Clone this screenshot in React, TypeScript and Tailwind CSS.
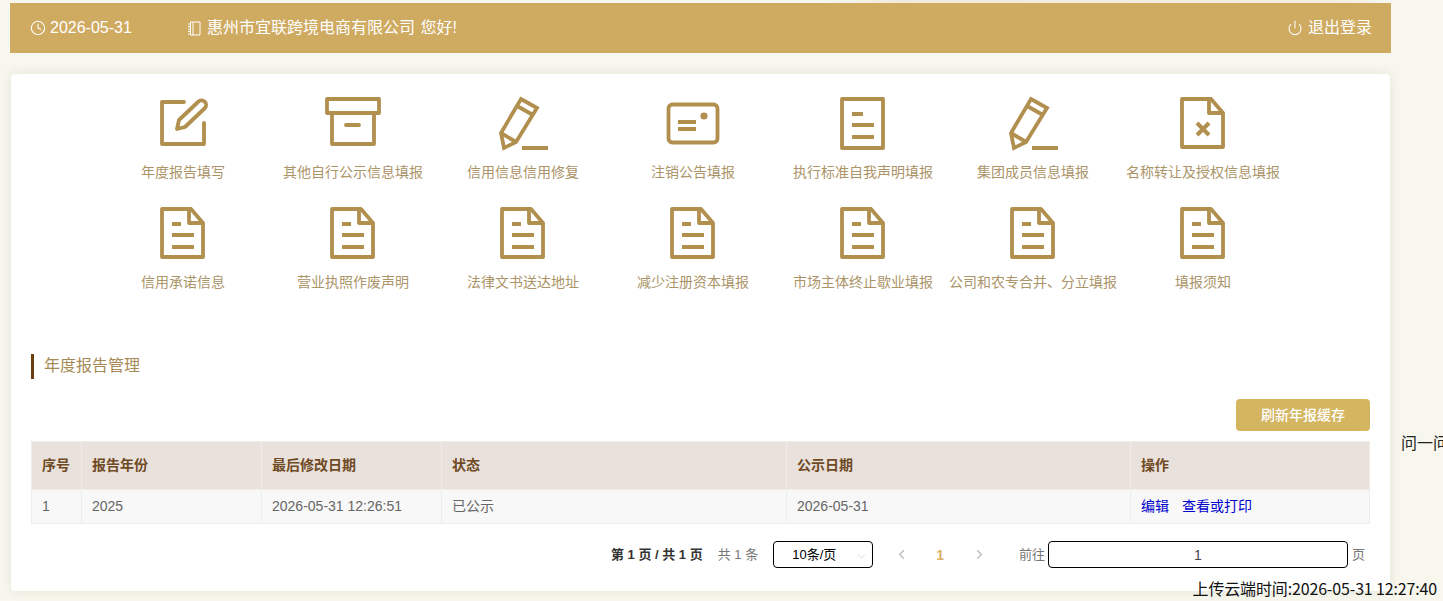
import { ChevronDown, ChevronLeft, ChevronRight, Clock, Power } from "lucide-react";
import type { ReactNode } from "react";

const FONT = "font-['Liberation_Sans','Noto_Sans_CJK_SC',sans-serif]";

function Glyph({ children }: { children: ReactNode }) {
	return (
		<svg
			viewBox="0 0 60 60"
			className="h-[60px] w-[60px]"
			fill="none"
			stroke="#b18f4f"
			strokeWidth="3.8"
			strokeLinejoin="round"
		>
			{children}
		</svg>
	);
}

const editIcon = (
	<Glyph>
		<path d="M31 8H9V50H51V29" strokeLinecap="round" />
		<path d="M24 35L26 26L45 8A4.6 4.6 0 0 1 52 14L32 33Z" />
	</Glyph>
);

const boxIcon = (
	<Glyph>
		<rect x="4" y="5" width="52" height="14" />
		<path d="M9 19V50H51V19" />
		<path d="M23 31H36" strokeLinecap="round" />
	</Glyph>
);

const pencilIcon = (
	<Glyph>
		<path d="M28 5L44 14L23 48L11 54L8 39Z" strokeLinejoin="miter" />
		<path d="M24 12L40 21M8 39L23 48" />
		<path d="M29 54H55" strokeWidth="4" />
	</Glyph>
);

const cardIcon = (
	<Glyph>
		<rect x="5.5" y="10.5" width="49" height="38" rx="4" />
		<path d="M15 28H33M15 35H33" />
		<circle cx="41" cy="22" r="3.6" fill="#b18f4f" stroke="none" />
	</Glyph>
);

const pageIcon = (
	<Glyph>
		<rect x="9" y="5" width="41" height="49" />
		<path d="M19 20H30M19 31H41M19 43H41" />
	</Glyph>
);

const foldOutline = (
	<>
		<path d="M9 5H38L50 19V53H9Z" />
		<path d="M36 5V19H50" />
	</>
);

const crossIcon = (
	<Glyph>
		{foldOutline}
		<path d="M24 29L36 41M36 29L24 41" strokeWidth="4" />
	</Glyph>
);

const docIcon = (
	<Glyph>
		{foldOutline}
		<path d="M19 20H28M19 31H41M19 43H41" />
	</Glyph>
);

const tiles = [
	{ label: "年度报告填写", icon: editIcon },
	{ label: "其他自行公示信息填报", icon: boxIcon },
	{ label: "信用信息信用修复", icon: pencilIcon },
	{ label: "注销公告填报", icon: cardIcon },
	{ label: "执行标准自我声明填报", icon: pageIcon },
	{ label: "集团成员信息填报", icon: pencilIcon },
	{ label: "名称转让及授权信息填报", icon: crossIcon },
	{ label: "信用承诺信息", icon: docIcon },
	{ label: "营业执照作废声明", icon: docIcon },
	{ label: "法律文书送达地址", icon: docIcon },
	{ label: "减少注册资本填报", icon: docIcon },
	{ label: "市场主体终止歇业填报", icon: docIcon },
	{ label: "公司和农专合并、分立填报", icon: docIcon },
	{ label: "填报须知", icon: docIcon },
];

export default function App() {
	return (
		<div className={`relative h-[601px] w-[1443px] overflow-hidden bg-[#f7f7ee] ${FONT}`}>
			<div className="h-[3px] bg-[linear-gradient(90deg,transparent_57%,#f1ebdc_62%,#f4efe3_94%,transparent_96%)]" />

			<header className="ml-[10px] flex h-[50px] w-[1381px] items-center bg-[#cfaa61] pl-[20px] pr-[19px] text-base text-white">
				<Clock size={16} strokeWidth={1.6} />
				<span className="ml-[4px] w-[137px]">2026-05-31</span>
				<svg viewBox="0 0 14 15" className="h-[15px] w-[14px]" fill="none" stroke="white" strokeWidth="1">
					<path d="M3.5 1H13V14H3.5ZM6 1V14M1 3H3.5M1 5.5H3.5M1 8H3.5M1 10.5H3.5M1 13H3.5" />
				</svg>
				<span className="ml-[6px] [word-spacing:1px]">惠州市宜联跨境电商有限公司 您好!</span>
				<Power size={16} strokeWidth={1.6} className="ml-auto" />
				<span className="ml-[5px]">退出登录</span>
			</header>

			<main className="ml-[11px] mt-[21px] h-[517px] w-[1379px] rounded-[4px] bg-white px-[20px] pt-[20px] shadow-[0_0_12px_rgba(90,90,50,0.12)]">
				<div className="ml-[67px] grid w-[1190px] grid-cols-7 gap-y-[22px]">
					{tiles.map((tile) => (
						<div key={tile.label} className="flex flex-col items-center">
							{tile.icon}
							<span className="mt-[8px] whitespace-nowrap text-sm leading-5 text-[#ab9468]">{tile.label}</span>
						</div>
					))}
				</div>

				<h2 className="mt-[62px] h-[25px] border-l-[3px] border-[#6b3f0e] pl-[10px] text-base leading-[23px] text-[#a58a55]">
					年度报告管理
				</h2>

				<div className="mt-[20px] flex justify-end">
					<button className="h-[32px] w-[134px] rounded-[4px] bg-[#d4b560] text-sm font-medium text-white">刷新年报缓存</button>
				</div>

				<table className="mt-[10px] w-[1338px] table-fixed border-collapse text-left text-sm">
					<colgroup>
						<col className="w-[50px]" />
						<col className="w-[180px]" />
						<col className="w-[180px]" />
						<col className="w-[345px]" />
						<col className="w-[344px]" />
						<col className="w-[239px]" />
					</colgroup>
					<thead>
						<tr className="h-[48px] bg-[#e9e1db] font-bold text-[#6f4a24]">
							{["序号", "报告年份", "最后修改日期", "状态", "公示日期", "操作"].map((title) => (
								<th key={title} className="border border-[#f0ece8] px-[10px] pb-[2px] font-bold">
									{title}
								</th>
							))}
						</tr>
					</thead>
					<tbody>
						<tr className="h-[34px] bg-[#f8f8f8] text-[#666666]">
							<td className="border border-[#ededed] px-[10px] pb-[2px]">1</td>
							<td className="border border-[#ededed] px-[10px] pb-[2px]">2025</td>
							<td className="border border-[#ededed] px-[10px] pb-[2px]">2026-05-31 12:26:51</td>
							<td className="border border-[#ededed] px-[10px] pb-[2px]">已公示</td>
							<td className="border border-[#ededed] px-[10px] pb-[2px]">2026-05-31</td>
							<td className="border border-[#ededed] px-[10px] pb-[2px] text-[#0000cc]">
								编辑<span className="ml-[13px]">查看或打印</span>
							</td>
						</tr>
					</tbody>
				</table>

				<div className="mt-[17px] flex h-[27px] items-center justify-end pr-[5px] text-[13px] text-[#777777]">
					<span className="font-bold text-[#333333]">第 1 页 / 共 1 页</span>
					<span className="ml-[15px]">共 1 条</span>
					<div className="relative ml-[15px] flex h-[27px] w-[100px] items-center rounded-[4px] border border-black pl-[18px] text-black">
						10条/页
						<ChevronDown size={13} strokeWidth={1} className="absolute right-[4px] top-[8px] text-[#bbbbbb]" />
					</div>
					<ChevronLeft size={15} strokeWidth={2.5} className="ml-[21px] text-[#c0c0c0]" />
					<span className="ml-[27px] text-sm font-bold text-[#dcb26a]">1</span>
					<ChevronRight size={15} strokeWidth={2.5} className="ml-[28px] text-[#c0c0c0]" />
					<span className="ml-[32px]">前往</span>
					<div className="ml-[3px] flex h-[27px] w-[300px] items-center justify-center rounded-[4px] border border-black text-sm text-[#444444]">
						1
					</div>
					<span className="ml-[4px]">页</span>
				</div>
			</main>

			<span className="absolute left-[1401px] top-[432px] whitespace-nowrap text-base text-[#222222]">问一问</span>
			<span className="absolute bottom-[2px] right-[6px] whitespace-nowrap text-base leading-[22px] tracking-[-0.15px] text-[#111111] font-['Noto_Sans_CJK_SC',sans-serif]">
				上传云端时间:2026-05-31 12:27:40
			</span>
		</div>
	);
}
